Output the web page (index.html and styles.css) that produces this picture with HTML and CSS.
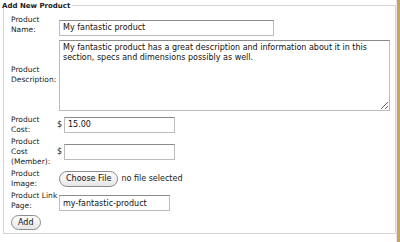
FILE: index.html
```html
<!DOCTYPE html>
<html lang="en">
<head>
  <meta charset="UTF-8" />
  <title>Add New Product</title>
  <link rel="stylesheet" href="styles.css">
</head>
<body>

<div class="page">
  <div class="panel">
    <div class="panel-head">
      <h2>Add New Product</h2>
      <span class="rule"></span>
    </div>
    <form class="panel-body">
      <div class="form-grid">
        <label for="name">Product Name:</label>
        <div><input type="text" id="name" class="field field-name" value="My fantastic product"></div>

        <label for="desc">Product Description:</label>
        <div><textarea id="desc" class="field field-desc">My fantastic product has a great description and information about it in this section, specs and dimensions possibly as well.</textarea></div>

        <label for="cost">Product Cost:</label>
        <div class="money"><span>$</span><input type="text" id="cost" class="field field-cost" value="15.00"></div>

        <label for="member">Product Cost (Member):</label>
        <div class="money"><span>$</span><input type="text" id="member" class="field field-cost"></div>

        <label>Product Image:</label>
        <div class="file-row"><button type="button" class="pill">Choose File</button><span>no file selected</span></div>

        <label for="link">Product Link Page:</label>
        <div><input type="text" id="link" class="field field-link" value="my-fantastic-product"></div>
      </div>
      <button type="button" class="pill add-btn">Add</button>
    </form>
  </div>
  <div class="edge"></div>
</div>

</body>
</html>
```

FILE: styles.css
```css
body {
  margin: 0;
  background: #fff;
  color: #1a1a1a;
  font-family: "DejaVu Sans", Verdana, sans-serif;
}
.page {
  display: flex;
  width: 400px;
  height: 242px;
}
.panel {
  flex: 1;
}
.panel-head {
  display: flex;
  align-items: center;
  height: 12px;
  padding-left: 2px;
}
.panel-head h2 {
  margin: 0 2px 0 0;
  font-size: 7px;
  font-weight: bold;
  line-height: 12px;
}
.rule {
  flex: 1;
  border-top: 1px solid #d4d4d4;
  margin-top: -1px;
}
.panel-body {
  margin: -6px 0 0 3px;
  padding: 9px 0 6px 7px;
  height: 212px;
  border: 1px solid #d4d4d4;
  border-top: none;
}
.form-grid {
  display: grid;
  grid-template-columns: 48px 1fr;
  align-items: center;
  row-gap: 2px;
}
.form-grid label {
  font-size: 7.5px;
  line-height: 10px;
  padding-right: 1px;
}
.field {
  font-family: "DejaVu Sans", Verdana, sans-serif;
  font-size: 8px;
  color: #111;
  border: 1px solid #bcbcbc;
  border-top-color: #8a8a8a;
  padding: 2px 3px;
  margin: 0;
  outline: none;
  box-sizing: border-box;
}
.field-name {
  width: 215px;
  height: 16px;
}
.field-desc {
  display: block;
  width: 331px;
  height: 71px;
  line-height: 10px;
  resize: vertical;
  margin: 2px 0;
}
.money {
  display: flex;
  align-items: center;
  font-size: 8px;
}
.money span {
  width: 6px;
  margin-left: -2px;
}
.field-cost {
  width: 111px;
  height: 16px;
  margin-left: 1px;
}
.field-link {
  width: 111px;
  height: 16px;
}
.file-row {
  display: flex;
  align-items: center;
  gap: 3px;
  font-size: 8px;
}
.pill {
  font-family: "DejaVu Sans", Verdana, sans-serif;
  font-size: 8px;
  color: #111;
  height: 16px;
  padding: 0 6px;
  border: 1px solid #8c8c8c;
  border-radius: 8px;
  background: linear-gradient(#ffffff, #e6e6e6);
  margin: 0;
}
.add-btn {
  display: block;
  margin-top: 4px;
  height: 15px;
}
.edge {
  width: 3px;
  border-left: 1px solid #e6e4ef;
  background: #c9a45e;
}
```
